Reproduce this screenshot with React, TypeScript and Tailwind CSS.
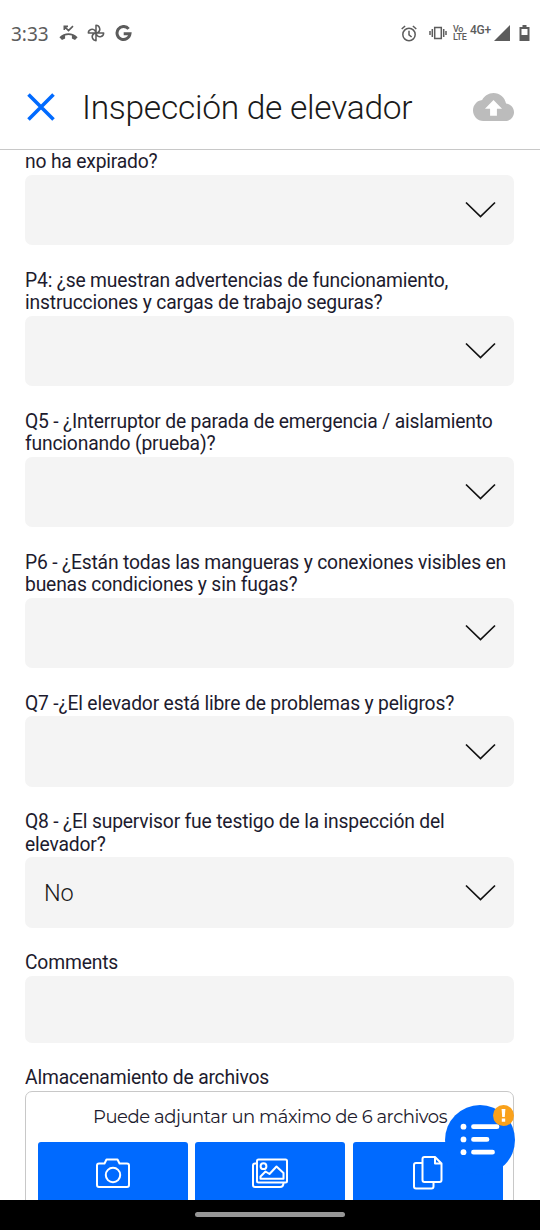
import React from "react";

const fields: { label: string[]; value?: string }[] = [
  { label: ["no ha expirado?"] },
  { label: ["P4: ¿se muestran advertencias de funcionamiento,", "instrucciones y cargas de trabajo seguras?"] },
  { label: ["Q5 - ¿Interruptor de parada de emergencia / aislamiento", "funcionando (prueba)?"] },
  { label: ["P6 - ¿Están todas las mangueras y conexiones visibles en", "buenas condiciones y sin fugas?"] },
  { label: ["Q7 -¿El elevador está libre de problemas y peligros?"] },
  { label: ["Q8 - ¿El supervisor fue testigo de la inspección del", "elevador?"], value: "No" },
];

function Label({ lines }: { lines: string[] }) {
  return (
    <div className="-mt-px pb-px text-[19.300px] leading-[22.500px] tracking-[-.18px] whitespace-nowrap text-[#1d1b2e]">
      {lines.map((line) => (
        <div key={line}>{line}</div>
      ))}
    </div>
  );
}

function StatusBar() {
  return (
    <div className="flex h-[66px] shrink-0 items-center justify-between pr-[10px] pl-[11px] text-[#5c5c5c]">
      <div className="flex items-center">
        <span className="w-[48px] pt-px font-['Noto_Sans',sans-serif] text-[19px] leading-6 font-normal">3:33</span>
        <svg className="h-[18px] w-[19px]" viewBox="0 0 19 18">
          <path d="M.4 13.200C5.300 7.900 13.700 7.900 18.600 13.200L16 16Q14.500 15.300 12.900 14.400V11.600Q9.500 10.500 6.100 11.600V14.400Q4.500 15.300 3 16Z" fill="currentColor" />
          <path d="M5.300 6V2.400H9M5.300 2.400L9.500 6.600L14 2.100" fill="none" stroke="currentColor" strokeWidth="1.600" />
        </svg>
        <svg className="ml-[9px] h-[18px] w-[18px]" viewBox="0 0 20 20" fill="none" stroke="currentColor" strokeWidth="1.700" strokeLinejoin="round">
          <path d="M10 10V1.500A4.200 4.200 0 0 1 12.600 9ZM10 10H18.500A4.200 4.200 0 0 1 11 12.600ZM10 10V18.500A4.200 4.200 0 0 1 7.400 11ZM10 10H1.500A4.200 4.200 0 0 1 9 7.400Z" />
        </svg>
        <svg className="ml-[10px] h-[17px] w-[17px]" viewBox="0 0 17 17" fill="none" stroke="currentColor" strokeWidth="3">
          <path d="M13.600 3.900A6.500 6.500 0 1 0 15 8.700H8.700" />
        </svg>
      </div>
      <div className="flex items-center">
        <svg className="h-[17px] w-[16px]" viewBox="0 0 16 17" fill="none" stroke="currentColor" strokeWidth="1.500">
          <circle cx="8" cy="9.500" r="6.200" />
          <path d="M8 5.700V9.800L10.600 12M.7 4L4.100 1M15.300 4L11.900 1" />
        </svg>
        <svg className="ml-[12px] h-[14px] w-[18px]" viewBox="0 0 18 14" fill="none" stroke="currentColor" strokeWidth="1.500">
          <path d="M5.700 1.500H12.300V12.500H5.700ZM3.300 3V11M1 5V9M14.700 3V11M17 5V9" />
        </svg>
        <div className="ml-[6px] w-[17px] text-[9px] leading-[8px] font-medium tracking-[-.3px]">
          <div>Vo</div>
          <div>LTE</div>
        </div>
        <span className="-mt-[7px] w-[24px] text-[12px] leading-[14px] font-medium tracking-[-.3px]">4G+</span>
        <svg className="h-[16px] w-[16px]" viewBox="0 0 16 16">
          <path d="M16 0V16H0Z" fill="currentColor" />
        </svg>
        <svg className="ml-[9px] h-[16px] w-[11px]" viewBox="0 0 11 16">
          <path d="M3.500 0H7.500V2H10.500V16H.5V2H3.500ZM2.500 4V10H8.500V4Z" fill="currentColor" fillRule="evenodd" />
        </svg>
      </div>
    </div>
  );
}

function CameraIcon() {
  return (
    <svg className="h-[32px] w-[36px]" viewBox="0 0 36 32" fill="none" stroke="white" strokeWidth="2" strokeLinejoin="round">
      <path d="M4 6.500H9.500L11.500 2.500H22.500L24.500 6.500H32Q34 6.500 34 8.500V28Q34 30 32 30H4Q2 30 2 28V8.500Q2 6.500 4 6.500Z" />
      <circle cx="18" cy="18" r="7.200" />
    </svg>
  );
}

function GalleryIcon() {
  return (
    <svg className="h-[32px] w-[38px]" viewBox="0 0 38 32" fill="none" stroke="white" strokeWidth="2" strokeLinejoin="round">
      <rect x="6" y="2.500" width="30" height="23" rx="1.500" />
      <path d="M6 6.500H4Q2 6.500 2 8.500V28Q2 30 4 30H29Q32.500 30 32.500 25.500" />
      <circle cx="12.500" cy="9.200" r="2.900" />
      <path d="M9.500 21.700V19.500L14.500 14.500L18.500 17L25.500 9.500L32.500 16V21.700Z" />
    </svg>
  );
}

function FilesIcon() {
  return (
    <svg className="h-[36px] w-[32px]" viewBox="0 0 32 36" fill="none" stroke="white" strokeWidth="2" strokeLinejoin="round">
      <path d="M12.500 2H23L29.500 8.500V25Q29.500 27 27.500 27H12.500Q10.500 27 10.500 25V4Q10.500 2 12.500 2ZM23 2V8.500H29.500" />
      <path d="M10.500 8H4Q2 8 2 10V31.500Q2 33.500 4 33.500H19.500Q21.500 33.500 21.500 31.500V27" />
    </svg>
  );
}

function MenuButton() {
  return (
    <button className="absolute top-[1105px] left-[445px] h-[70px] w-[70px] rounded-full bg-[#006aff]">
      <svg className="h-[70px] w-[70px]" viewBox="0 0 70 70" fill="none" stroke="white" strokeWidth="4.800" strokeLinecap="round">
        <path d="M28.500 21.700H52M28.500 34.400H42M28.500 47.200H47.500" />
        <g fill="white" stroke="none">
          <circle cx="18.500" cy="21.700" r="2.900" />
          <circle cx="18.500" cy="34.400" r="2.900" />
          <circle cx="18.500" cy="47.200" r="2.900" />
        </g>
      </svg>
      <span className="absolute top-0 left-[48px] flex h-[21px] w-[21px] items-center justify-center rounded-full bg-[#f9a11b]">
        <svg className="h-[13px] w-[5px]" viewBox="0 0 5 13" fill="white">
          <path d="M.6 0H4.400L3.800 8H1.200ZM.8 9.500H4.200V12.700H.8Z" />
        </svg>
      </span>
    </button>
  );
}

export default function App() {
  return (
    <div className="relative flex h-[1230px] w-[540px] flex-col overflow-hidden bg-white font-[Roboto,sans-serif]">
      <StatusBar />
      <header className="flex h-[84px] shrink-0 items-center border-b border-[#c8c8c8] pr-[26px] pb-[2px] pl-[27px]">
        <svg className="h-[28px] w-[28px]" viewBox="0 0 28 28" stroke="#006aff" strokeWidth="3.600">
          <path d="M1.500 1.500L26.500 26.500M26.500 1.500L1.500 26.500" />
        </svg>
        <h1 className="ml-[27px] flex-1 pt-[3px] text-[33.500px] leading-10 font-light tracking-[-.27px] whitespace-nowrap text-[#1a1a1a]">Inspección de elevador</h1>
        <svg className="h-[28px] w-[41px]" viewBox="0 4 24 16" preserveAspectRatio="none" fill="#bcbcbc">
          <path d="M19.350 10.040C18.670 6.590 15.640 4 12 4 9.110 4 6.600 5.640 5.350 8.040 2.340 8.360 0 10.910 0 14c0 3.310 2.690 6 6 6h13c2.760 0 5-2.240 5-5 0-2.640-2.050-4.780-4.650-4.960zM14 13v4h-4v-4H7l5-5 5 5h-3z" />
        </svg>
      </header>
      <main className="flex min-h-0 flex-1 flex-col gap-[25.500px] overflow-hidden px-[25px] pt-[2px]">
        {fields.map((field) => (
          <section key={field.label[0]} className="shrink-0">
            <Label lines={field.label} />
            <div className="flex h-[70.500px] w-[489px] items-center justify-between rounded-[7px] bg-[#f4f4f4] pr-[18px] pl-[19px]">
              <span className="pt-[2px] text-[23.500px] leading-7 font-light tracking-[-.3px] text-[#1a1a1a]">{field.value}</span>
              <svg className="h-[17px] w-[31px]" viewBox="0 0 31 17" fill="none" stroke="#111" strokeWidth="1.700">
                <path d="M1 1.500L15.500 15.500L30 1.500" />
              </svg>
            </div>
          </section>
        ))}
        <section className="shrink-0">
          <Label lines={["Comments"]} />
          <div className="h-[67.500px] w-[489px] rounded-[7px] bg-[#f4f4f4]" />
        </section>
        <section className="-mt-[.5px] shrink-0">
          <Label lines={["Almacenamiento de archivos"]} />
          <div className="h-[150px] w-[489px] rounded-[7px] border border-[#c8c8c8] px-[12px] pt-[13px]">
            <p className="ml-[55px] h-[37.500px] font-[Montserrat,Lato,sans-serif] text-[18px] leading-6 tracking-[-.45px] whitespace-nowrap text-[#1d1b2e]">
              Puede adjuntar un máximo de 6 archivos
            </p>
            <div className="flex gap-[7.400px]">
              {[CameraIcon, GalleryIcon, FilesIcon].map((Icon, i) => (
                <button key={i} className="flex h-[62px] w-[150px] shrink-0 items-center justify-center rounded-[3px] bg-[#006aff]">
                  <Icon />
                </button>
              ))}
            </div>
          </div>
        </section>
      </main>
      <footer className="flex h-[30px] shrink-0 justify-center bg-black pt-[12px]">
        <div className="h-[5px] w-[150px] rounded-full bg-[#969696]" />
      </footer>
      <MenuButton />
    </div>
  );
}
